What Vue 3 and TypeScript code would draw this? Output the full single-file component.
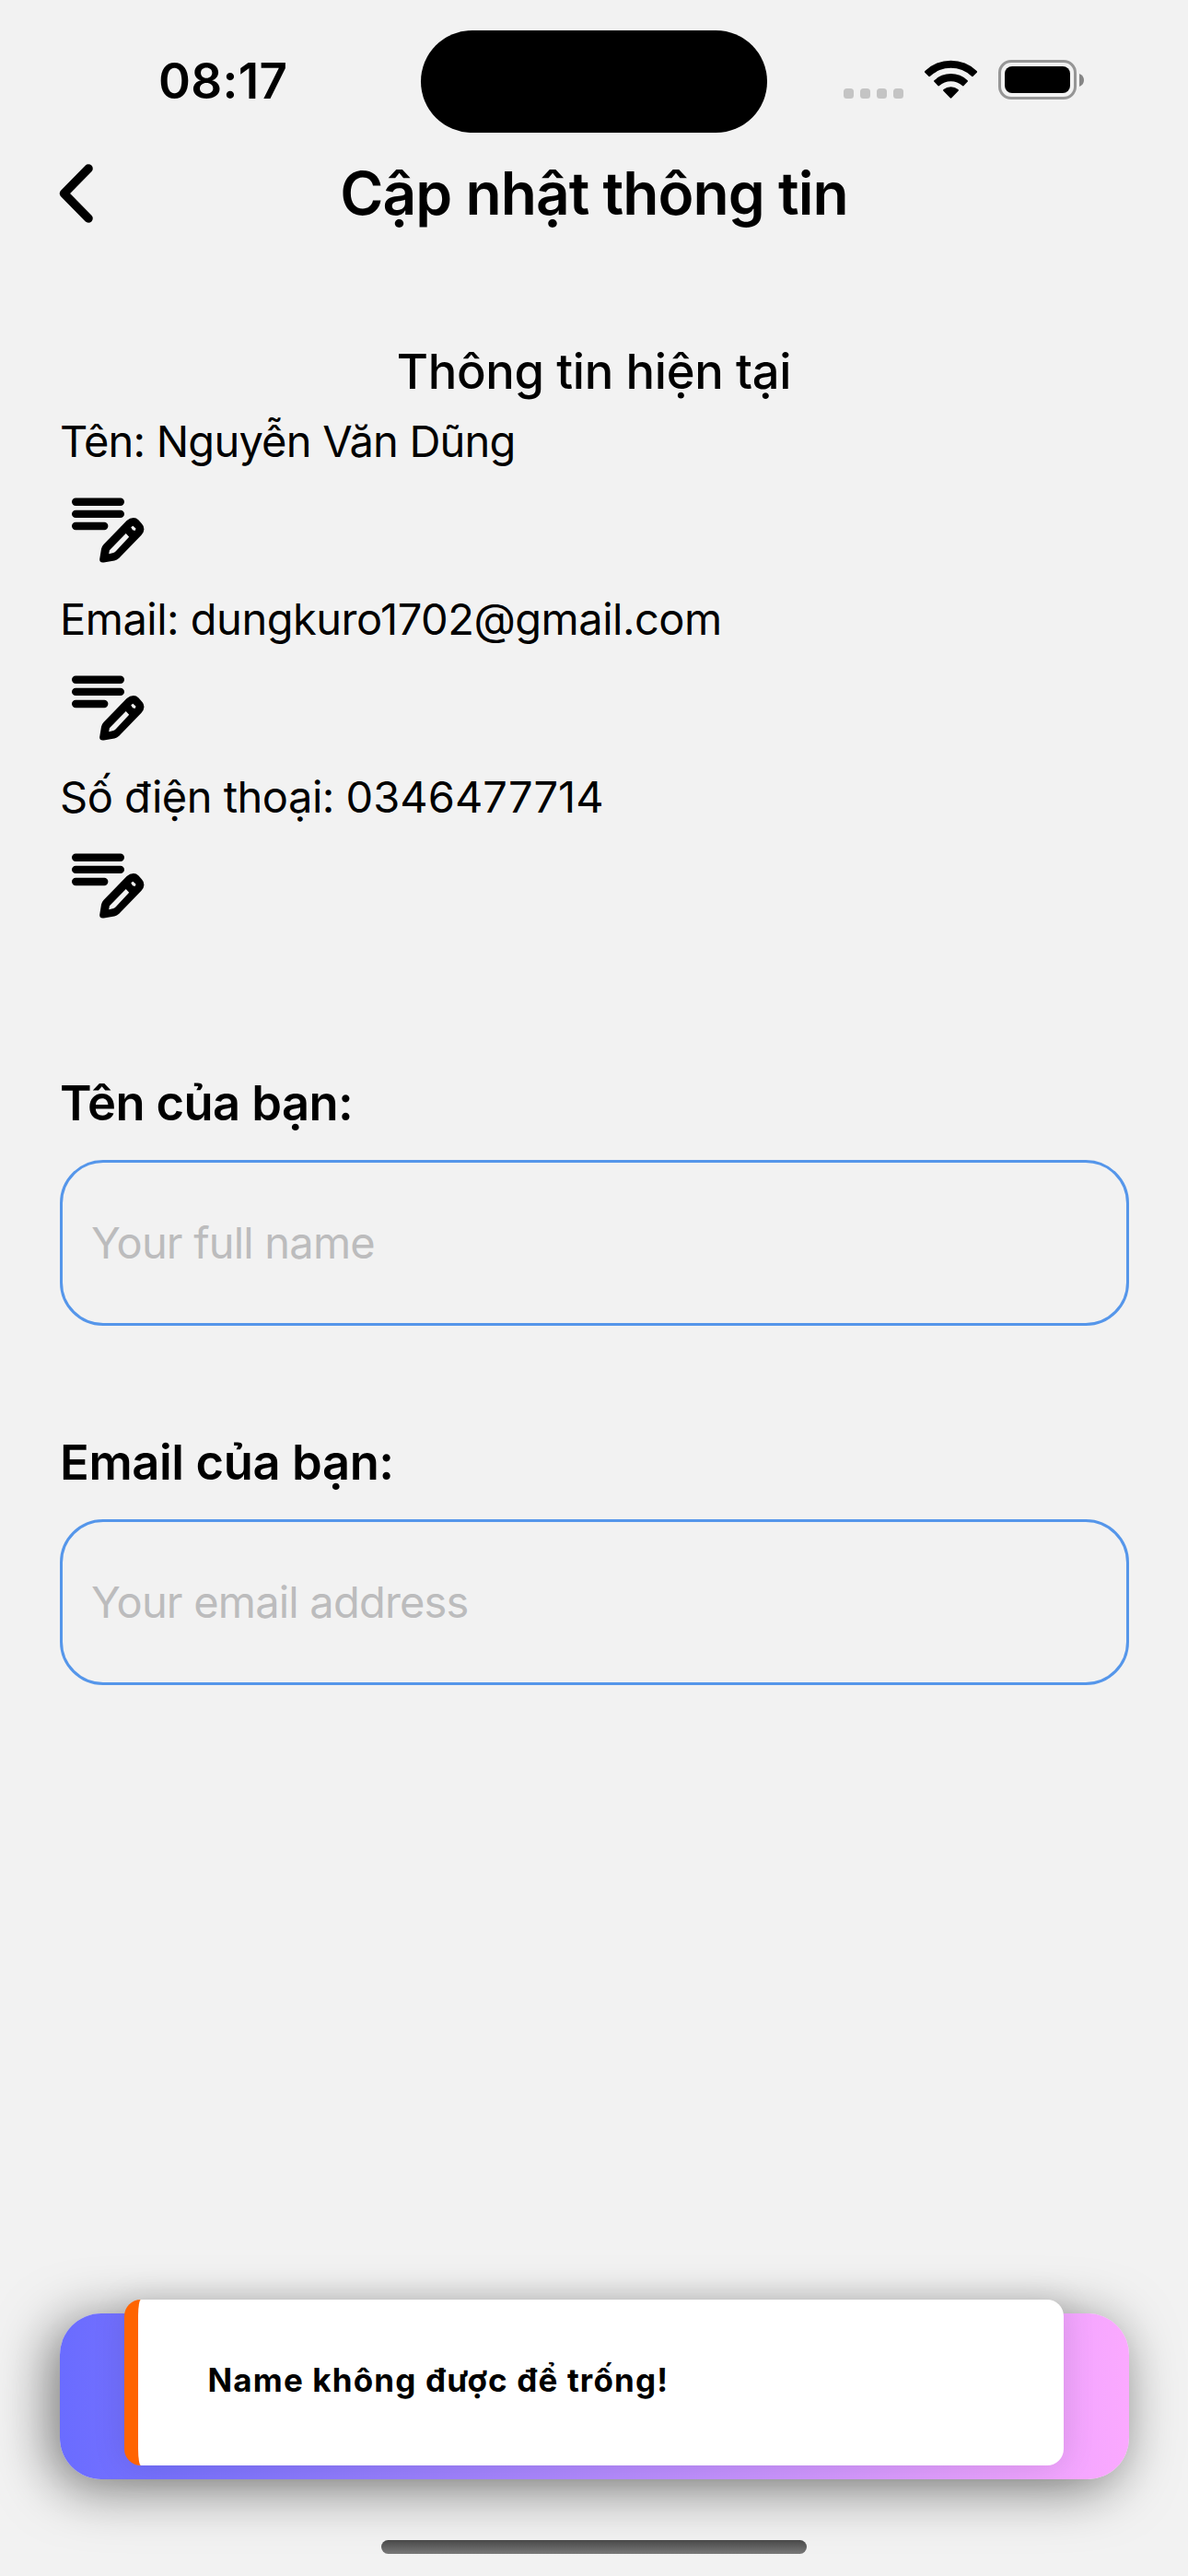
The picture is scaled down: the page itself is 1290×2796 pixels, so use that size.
<script setup lang="ts">
interface InfoRow { label: string; value: string }
interface FormField { id: string; label: string; placeholder: string }

const rows: InfoRow[] = [
  { label: 'Tên', value: 'Nguyễn Văn Dũng' },
  { label: 'Email', value: 'dungkuro1702@gmail.com' },
  { label: 'Số điện thoại', value: '0346477714' },
]

const fields: FormField[] = [
  { id: 'name', label: 'Tên của bạn:', placeholder: 'Your full name' },
  { id: 'email', label: 'Email của bạn:', placeholder: 'Your email address' },
]
</script>

<template>
  <div class="screen">
    <div class="status">
      <div class="time">08:17</div>
      <div class="island"></div>
      <div class="indicators">
        <div class="dots"><i v-for="n in 4" :key="n"></i></div>
        <svg class="wifi" width="57" height="42" viewBox="0 0 57 42">
          <path d="M0 13.5 Q-.5 12.8 .4 12 A40.5 40.5 0 0 1 56.6 12 Q57.5 12.8 57 13.5 L52.4 18 Q51.8 18.4 51 17.8 A32.5 32.5 0 0 0 6 17.8 Q5.2 18.4 4.6 18 Z" />
          <path d="M10.2 23.6 Q9.7 23 10.4 22.3 A26 26 0 0 1 46.6 22.3 Q47.3 23 46.8 23.6 L42.3 28.2 Q41.7 28.7 41 28.1 A18.5 18.5 0 0 0 16 28.1 Q15.3 28.7 14.7 28.2 Z" />
          <path d="M20.2 33.6 Q19.7 32.8 20.6 32.1 A12.5 12.5 0 0 1 36.4 32.1 Q37.3 32.8 36.8 33.6 L29.3 41.3 Q28.5 42 27.7 41.3 Z" />
        </svg>
        <div class="battery"><span class="level"></span></div>
        <svg class="nub" width="5" height="14" viewBox="0 0 5 14"><path d="M0 0 Q5 2 5 7 Q5 12 0 14 Z" fill="#868686" /></svg>
      </div>
    </div>

    <header class="nav">
      <svg class="back" width="38" height="64" viewBox="0 0 38 64">
        <path d="M32 5 L5.5 32 L32 59" fill="none" stroke="#000" stroke-width="9.6" stroke-linecap="round" stroke-linejoin="round" />
      </svg>
      <h1>Cập nhật thông tin</h1>
    </header>

    <section class="info">
      <h2>Thông tin hiện tại</h2>
      <div v-for="(row, i) in rows" :key="row.label" class="row">
        <p :class="'line-' + i">{{ row.label }}: <span>{{ row.value }}</span></p>
        <svg class="edit" width="79" height="71" viewBox="0 0 79 71">
          <path d="M4.2 4.8H52.8M4.2 17.9H52.8M4.2 31H35.2" fill="none" stroke="#000" stroke-width="8.4" stroke-linecap="round" />
          <path fill-rule="evenodd" d="M59.7 24.9 Q63 22 67 22 Q70 22 72.5 24.4 L76 28.5 Q78.6 31.2 78.4 34.4 Q78.2 38 75.3 41 L51.3 65.7 Q49 67.8 46.3 68.4 L34.7 70.4 Q29.7 71 30.2 66.8 L32 55.7 Q32.6 53 34.7 50.8 Z M58.7 39 L40.9 57.2 L40.2 61.2 L45.2 60 Q46.8 59.3 47.8 58.2 L62.2 42.8 Z M64.2 32.2 L66.4 30.8 L69.6 33.8 L68.6 35.9 L66 35.2 Z" />
        </svg>
      </div>
    </section>

    <form class="form" @submit.prevent>
      <div v-for="field in fields" :key="field.id" class="group">
        <label :for="field.id" :class="'label-' + field.id">{{ field.label }}</label>
        <input :id="field.id" type="text" :placeholder="field.placeholder" />
      </div>
    </form>

    <footer class="bottom">
      <div class="submit">
        <div class="toast"><span>Name không được để trống!</span></div>
      </div>
      <div class="home"></div>
    </footer>
  </div>
</template>

<style>
body { background: #f2f2f2; }
</style>

<style scoped>
* { box-sizing: border-box; margin: 0; padding: 0; }
.screen {
  width: 1290px; height: 2796px; overflow: hidden;
  display: flex; flex-direction: column;
  background: #f2f2f2; color: #000;
  font-family: Inter, "Noto Sans", sans-serif;
}
.status { display: flex; height: 164px; flex: none; }
.time {
  width: 457px; padding: 56px 0 0 172px; letter-spacing: .3px;
  font-size: 53px; line-height: 64px; font-weight: 600; white-space: nowrap;
}
.island { width: 376px; height: 111px; margin-top: 33px; border-radius: 56px; background: #000; }
.indicators { display: flex; align-items: flex-start; padding: 65px 0 0 83px; }
.dots { display: flex; gap: 7px; margin-top: 31px; }
.dots i { width: 11px; height: 11px; border-radius: 3.5px; background: #c4c4c4; }
.wifi { margin-left: 23px; }
.battery { width: 85px; height: 43px; margin-left: 23px; padding: 4px; border: 3px solid #969696; border-radius: 14px; }
.level { display: block; height: 100%; border-radius: 8px; background: #000; }
.nub { margin: 14.5px 0 0 3px; }

.nav { display: flex; align-items: center; justify-content: center; height: 91px; flex: none; position: relative; }
.back { position: absolute; left: 64px; top: 13.5px; }
h1 { font-size: 64px; line-height: 80px; font-weight: 600; letter-spacing: -.95px; white-space: nowrap; }

.info { padding: 0 65px; margin-top: 116px; }
h2 { font-size: 52.5px; line-height: 64px; font-weight: 500; letter-spacing: -.35px; text-align: center; white-space: nowrap; }
.row { height: 193px; padding-top: 15px; }
.row p { font-size: 47px; line-height: 58px; white-space: nowrap; }
.line-0 { letter-spacing: -.78px; }
.line-1 { letter-spacing: -.5px; }
.line-2 { letter-spacing: -.5px; }
.line-2 span { letter-spacing: .05px; }
.edit { display: block; margin: 32px 0 0 13px; overflow: visible; }

.form { margin: 151px 65px 0 65px; display: flex; flex-direction: column; gap: 116px; }
.group { display: flex; flex-direction: column; }
label { font-size: 52.5px; line-height: 64px; font-weight: 600; white-space: nowrap; }
.label-name { letter-spacing: -.6px; }
.label-email { letter-spacing: -.4px; }
input {
  width: 1161px; height: 180px; margin-top: 30px; padding: 0 31px 2px 31px;
  border: 3px solid #5596ea; border-radius: 47px; background: transparent;
  font: 400 47px Inter, sans-serif; letter-spacing: -.8px; color: #000; outline: none;
}
input::placeholder { color: #bcbcbd; opacity: 1; }

.bottom { margin-top: auto; height: 285px; display: flex; flex-direction: column; align-items: center; flex: none; }
.submit {
  position: relative; width: 1161px; height: 180px; border-radius: 45px;
  background: linear-gradient(90deg, #6a6cff, #fba9ff);
  box-shadow: -9px 9px 60px rgba(0, 0, 0, .53);
}
.toast {
  position: absolute; left: 70px; top: -15px; width: 1020px; height: 180px;
  display: flex; align-items: center; padding: 0 0 6px 76px;
  background: #fff; border-left: 15px solid #ff6400; border-radius: 18px;
  box-shadow: 0 0 36px rgba(0, 0, 0, .12);
  font-size: 35px; font-weight: 700; letter-spacing: 1.15px; white-space: nowrap;
}
.home { width: 462px; height: 15px; margin-top: 66px; border-radius: 8px; background: linear-gradient(#494949, #7a7a7a); }
</style>
